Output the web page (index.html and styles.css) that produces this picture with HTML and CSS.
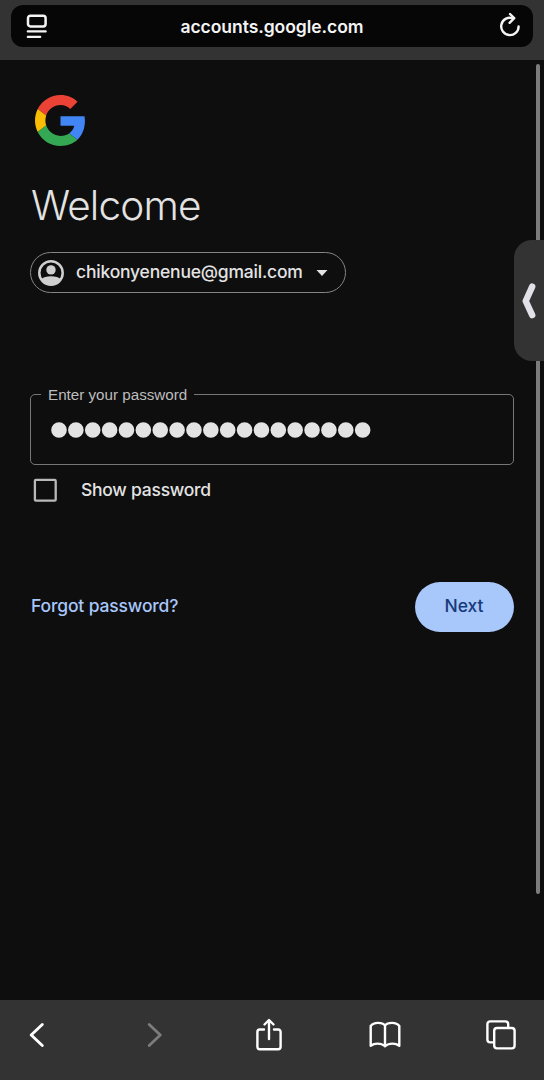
FILE: index.html
```html
<!DOCTYPE html>
<html lang="en">
<head>
<meta charset="utf-8">
<title>Sign in</title>
<link rel="stylesheet" href="styles.css">
</head>
<body>
<div class="screen">
  <header class="topbar">
    <div class="address">
      <svg class="reader-icon" width="22" height="26" viewBox="0 0 22 26" fill="none" stroke="#f4f4f4" stroke-linecap="round"><rect x="2" y="1.800" width="17.600" height="10.600" rx="2.400" stroke-width="2.500"/><path d="M1.800 17.400h17.900M1.800 22.900h12.400" stroke-width="2.200"/></svg>
      <span class="url">accounts.google.com</span>
      <svg class="reload-icon" width="22" height="26" viewBox="0 0 22 26" fill="none" stroke="#f4f4f4" stroke-width="2.400" stroke-linecap="round" stroke-linejoin="round"><path d="M13.500 6.100A8.700 8.700 0 1 0 19.600 14.400"/><path d="M11 2l4.200 4.200-4.600 4.600"/></svg>
    </div>
  </header>
  <main class="page">
    <svg class="logo" width="51" height="51" viewBox="0 0 48 48"><path fill="#EA4335" d="M24 9.5c3.54 0 6.71 1.22 9.21 3.6l6.85-6.85C35.9 2.38 30.47 0 24 0 14.62 0 6.51 5.38 2.56 13.22l7.98 6.19C12.43 13.72 17.74 9.5 24 9.5z"/><path fill="#4285F4" d="M46.98 24.55c0-1.57-.15-3.09-.38-4.55H24v9.02h12.94c-.58 2.96-2.26 5.48-4.78 7.18l7.73 6c4.51-4.18 7.09-10.36 7.09-17.65z"/><path fill="#FBBC05" d="M10.53 28.59c-.48-1.45-.76-2.99-.76-4.59s.27-3.14.76-4.59l-7.98-6.19C.92 16.46 0 20.12 0 24c0 3.88.92 7.54 2.56 10.78l7.97-6.19z"/><path fill="#34A853" d="M24 48c6.48 0 11.93-2.13 15.89-5.81l-7.73-6c-2.15 1.45-4.92 2.3-8.16 2.3-6.26 0-11.57-4.22-13.47-9.91l-7.98 6.19C6.51 42.62 14.62 48 24 48z"/></svg>
    <h1 class="title">Welcome</h1>
    <div class="account">
      <svg width="26" height="26" viewBox="0 0 26 26"><circle cx="13" cy="13" r="11.700" fill="none" stroke="#cfcfcf" stroke-width="2.500"/><circle cx="13" cy="9.900" r="4.700" fill="#cfcfcf"/><path d="M2.800 19.400C5 17.200 8.800 16.200 13 16.200s8 1 10.200 3.200A12 12 0 0 1 2.800 19.400z" fill="#cfcfcf"/></svg>
      <span class="email">chikonyenenue@gmail.com</span>
      <svg class="caret" width="12" height="6" viewBox="0 0 12 6"><path d="M.5 0h11L6 6z" fill="#e3e3e3"/></svg>
    </div>
    <fieldset class="field">
      <legend class="label">Enter your password</legend>
      <svg class="dots" width="320" height="16" viewBox="0 0 320 16"><path d="M8 8H312" stroke="#e3e3e3" stroke-width="15.600" stroke-linecap="round" stroke-dasharray="0 16.870"/></svg>
    </fieldset>
    <div class="show"><svg width="24" height="24" viewBox="0 0 24 24" fill="none" stroke="#b9b9b9" stroke-width="2.300"><rect x="1.900" y="1.900" width="20.800" height="20.800" rx="1"/></svg><span class="show-text">Show password</span></div>
    <div class="actions"><a class="forgot">Forgot password?</a><button class="next">Next</button></div>
    <div class="scrollbar"></div>
    <div class="drawer"><svg width="16" height="36" viewBox="0 0 16 36" fill="none" stroke="#e2e1e8" stroke-width="6.400" stroke-linecap="round" stroke-linejoin="round"><path d="M11.200 3.600L4.700 18l6.500 14.200"/></svg></div>
  </main>
  <nav class="toolbar">
    <span class="tool"><svg width="16" height="26" viewBox="0 0 16 26" fill="none" stroke="#fff" stroke-width="2.900" stroke-linecap="round" stroke-linejoin="round"><path d="M13.300 2.500L2.200 13l11.100 10.500"/></svg></span>
    <span class="tool forward"><svg width="16" height="26" viewBox="0 0 16 26" fill="none" stroke="#7c7c7c" stroke-width="2.800" stroke-linecap="round" stroke-linejoin="round"><path d="M2.200 2.500l11.100 10.500L2.200 23.500"/></svg></span>
    <span class="tool"><svg width="26" height="34" viewBox="0 0 26 34" fill="none" stroke="#fff" stroke-width="2.400" stroke-linecap="round" stroke-linejoin="round"><path d="M8 11.500H3.800a2.400 2.400 0 0 0-2.400 2.400v14.900a2.400 2.400 0 0 0 2.400 2.400h18.400a2.400 2.400 0 0 0 2.400-2.400V13.900a2.400 2.400 0 0 0-2.400-2.400H18M13 21V2.500M8.500 6.500L13 2l4.500 4.500"/></svg></span>
    <span class="tool"><svg width="32" height="28" viewBox="0 0 32 28" fill="none" stroke="#fff" stroke-width="2.400" stroke-linecap="round" stroke-linejoin="round"><path d="M16 4.500C14.500 2.500 12 1.900 9 1.900c-3.500 0-5.800 1-7.300 3.100v19.800c2-1.500 4.100-2.200 6.800-2.200 3.200 0 5.500.8 7.500 2.600 2-1.800 4.300-2.600 7.500-2.600 2.700 0 4.800.7 6.800 2.200V5C28.800 2.900 26.500 1.900 23 1.900c-3 0-5.500.6-7 2.600zM16 4.500v20.700"/></svg></span>
    <span class="tool"><svg width="30" height="30" viewBox="0 0 30 30" fill="none" stroke="#fff" stroke-width="2.400" stroke-linejoin="round"><rect x="8.200" y="8" width="20.400" height="20.400" rx="2.800"/><path d="M22.200 8V4.200a2.800 2.800 0 0 0-2.800-2.800H4.200a2.800 2.800 0 0 0-2.800 2.800v15.400a2.800 2.800 0 0 0 2.800 2.800h4"/></svg></span>
  </nav>
</div>
</body>
</html>
```
FILE: styles.css
```css
* { box-sizing: border-box; }
body { margin: 0; background: #0e0e0e; font-family: Inter, "Liberation Sans", sans-serif; color: #e3e3e3; }
.screen { width: 544px; height: 1080px; display: flex; flex-direction: column; overflow: hidden; }
.topbar { height: 60px; background: #333; padding: 5px 11px 0; flex: none; }
.address { width: 522px; height: 42px; border-radius: 12px; background: #060606; display: flex; align-items: center; justify-content: space-between; padding: 0 12px 0 15px; }
.reader-icon { margin-top: 2px; }
.reload-icon { margin-top: -3px; }
.url { font-size: 17.5px; font-weight: 600; letter-spacing: -0.05px; color: #f4f4f4; white-space: nowrap; padding-right: 3px; }
.page { flex: 1; position: relative; padding: 35px 30px 0; background: #0e0e0e; }
.logo { display: block; margin-left: 5px; }
.title { margin: 33px 0 0; height: 52px; line-height: 53px; font-size: 40.5px; font-weight: 350; letter-spacing: -0.85px; padding-left: 1px; white-space: nowrap; }
.account { margin-top: 21px; width: 316px; height: 41px; border: 1px solid #858585; border-radius: 21px; display: flex; align-items: center; padding-left: 7px; }
.email { margin-left: 12px; width: 227px; font-size: 17.5px; font-weight: 450; letter-spacing: -0.2px; white-space: nowrap; padding-bottom: 2px; }
.caret { margin-left: 13px; margin-top: 1px; }
.field { margin: 91px 0 0; padding: 0 0 0 10px; width: 484px; height: 81px; border: 1.5px solid #777; border-radius: 5px; min-width: 0; }
.label { padding: 1px 7px 0; height: 20px; font: 15.2px/20px "Liberation Sans", sans-serif; color: #bdbdbd; white-space: nowrap; }
.dots { display: block; margin: 18px 0 0 10px; }
.show { display: flex; align-items: center; height: 24px; margin-top: 13px; padding-left: 3px; }
.show-text { margin-left: 24px; font-size: 17.5px; font-weight: 450; letter-spacing: -0.25px; white-space: nowrap; padding-bottom: 2px; }
.actions { display: flex; justify-content: space-between; align-items: center; margin-top: 80px; height: 50px; width: 484px; }
.forgot { color: #a8c7fa; font-size: 17.5px; font-weight: 500; letter-spacing: -0.15px; white-space: nowrap; padding: 0 0 3px 1px; }
.next { width: 99px; height: 50px; padding: 0 1px 3px 0; border: 0; border-radius: 25px; background: #a8c7fa; color: #173b7a; font: 500 17.5px Inter, sans-serif; letter-spacing: -0.1px; }
.scrollbar { position: absolute; right: 4px; top: 4px; width: 4px; height: 830px; border-radius: 2px; background: #7c7c7c; }
.drawer { position: absolute; right: 0; top: 180px; width: 30px; height: 121px; border-radius: 18px 0 0 18px; background: #333; display: flex; align-items: center; padding-left: 7px; }
.toolbar { flex: none; height: 80px; background: #333; display: flex; gap: 84px; padding: 0 0 11px 21px; align-items: center; }
.tool { width: 32px; flex: none; display: flex; justify-content: center; }
.forward { padding-left: 4px; }
```
